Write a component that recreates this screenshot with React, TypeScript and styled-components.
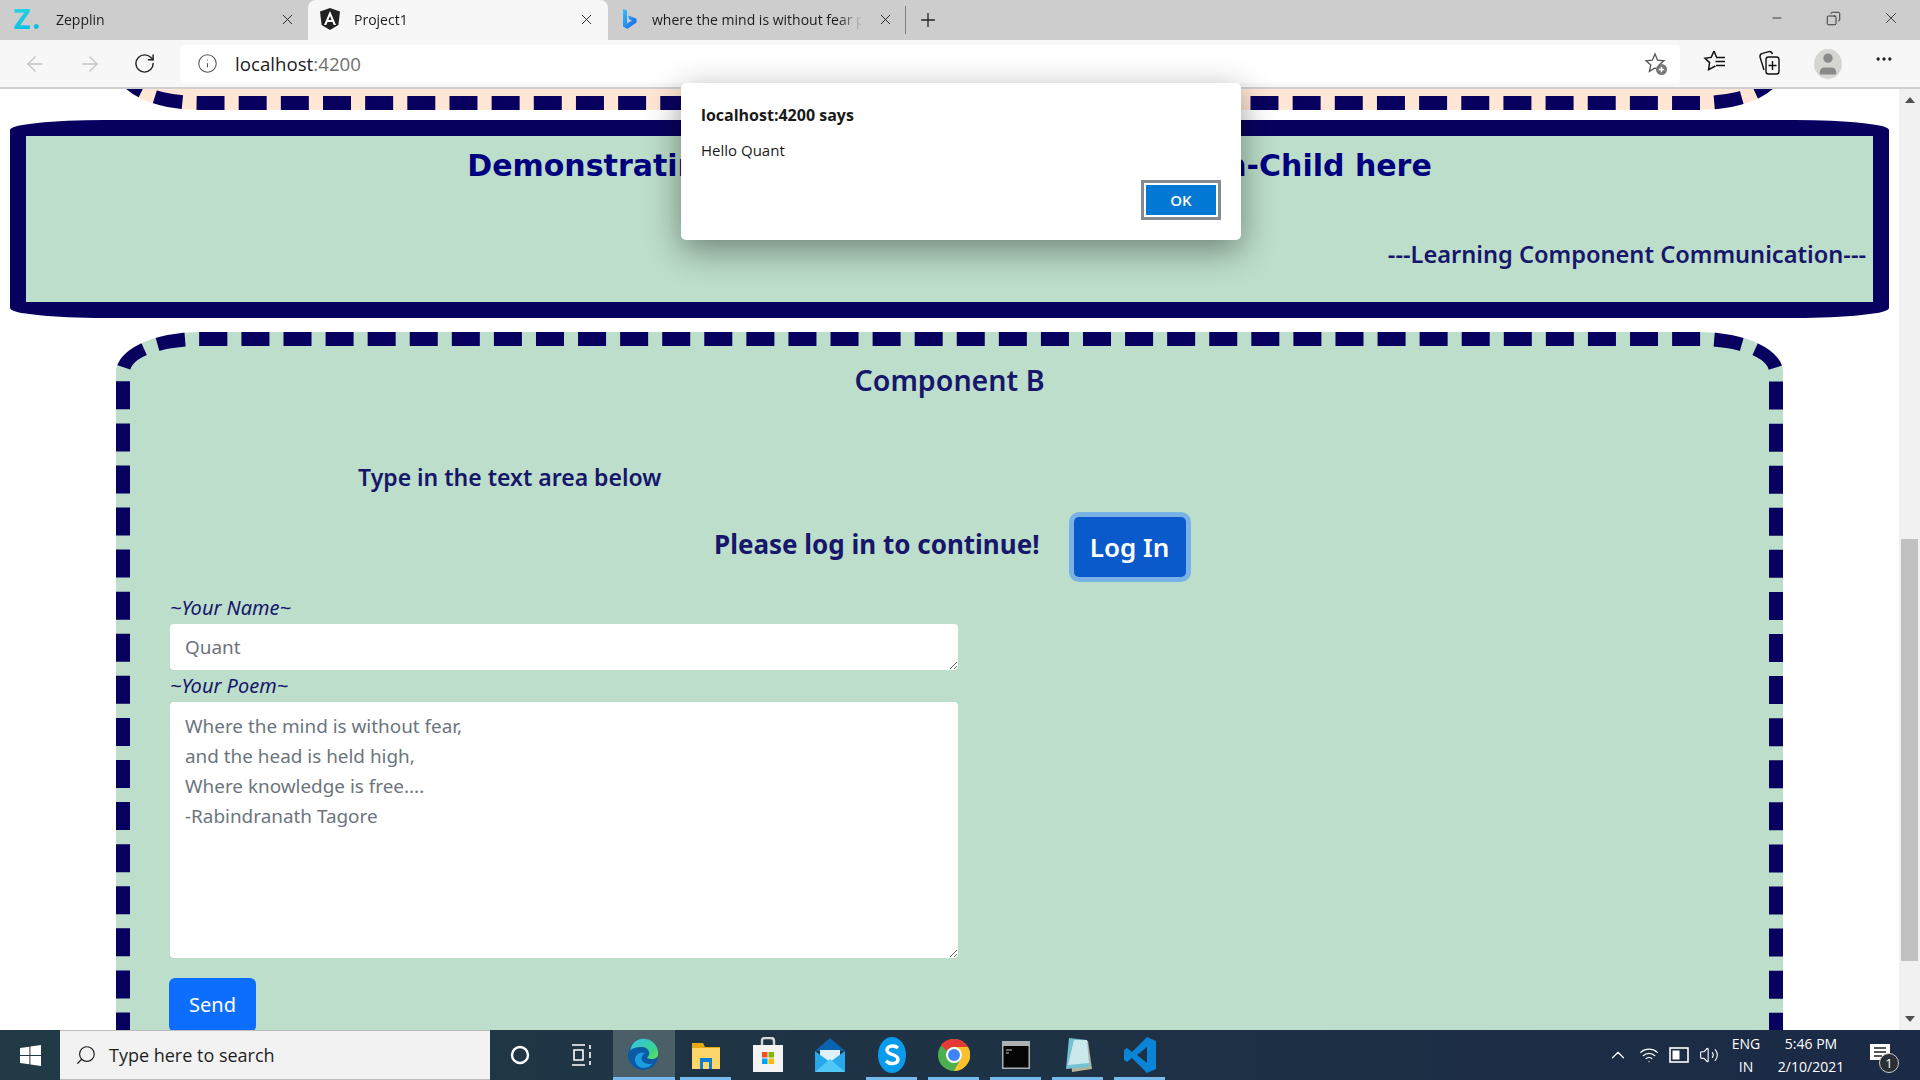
import React from 'react';
import styled, { createGlobalStyle } from 'styled-components';
import {
  ArrowLeft, ArrowRight, RotateCw, Info, Plus, X, Minus, Copy, Search, MoreHorizontal,
  ChevronUp, Wifi, Volume2, User,
} from 'lucide-react';

const navy = '#08005e';
const ink = '#16166b';
const uiFont = '"Open Sans", "Noto Sans", sans-serif';
const pageFont = '"Noto Sans", "Open Sans", sans-serif';

const GlobalStyle = createGlobalStyle`
  html, body { margin: 0; padding: 0; height: 100%; overflow: hidden; }
  #root { height: 100%; }
  * { box-sizing: border-box; }
`;

// browser chrome
const Screen = styled.div`
  position: relative;
  width: 1920px;
  height: 1080px;
  display: flex;
  flex-direction: column;
  overflow: hidden;
  font-family: ${uiFont};
  background: #fff;
`;
const TabStrip = styled.div`
  height: 40px;
  flex: none;
  display: flex;
  align-items: stretch;
  background: #cdcdcd;
  gap: 2px;
`;
const Tab = styled.div<{ $active?: boolean; $width: number; $endPad: number }>`
  width: ${(p) => p.$width}px;
  display: flex;
  align-items: center;
  padding: 0 ${(p) => p.$endPad}px 2px 12px;
  gap: 14px;
  border-radius: 8px 8px 0 0;
  background: ${(p) => (p.$active ? '#f7f7f7' : 'transparent')};
  font-size: 14px;
  color: #1c1c1c;
`;
const TabTitle = styled.span`
  flex: 1;
  overflow: hidden;
  white-space: nowrap;
  -webkit-mask-image: linear-gradient(to right, #000 88%, transparent);
  mask-image: linear-gradient(to right, #000 88%, transparent);
`;
const ZepplinMark = styled.span`
  width: 30px;
  font: 800 27px/1 "Inter", sans-serif;
  text-align: center;
  background: linear-gradient(160deg, #2fd6e0, #00b8e6);
  -webkit-background-clip: text;
  background-clip: text;
  color: transparent;
`;
const TabDivider = styled.div`
  width: 1px;
  height: 28px;
  margin: 6px 0 0 0;
  background: #7d7d7d;
`;
const NewTab = styled.div`
  width: 40px;
  display: flex;
  align-items: center;
  justify-content: center;
  color: #222;
`;
const WindowControls = styled.div`
  margin-left: auto;
  display: flex;
  align-items: center;
  height: 36px;
  padding-right: 1px;
`;
const WindowButton = styled.div`
  width: 57px;
  display: flex;
  justify-content: center;
  color: #111;
`;

const Toolbar = styled.div`
  height: 49px;
  flex: none;
  display: flex;
  align-items: center;
  padding: 0 0 0 7px;
  background: #f7f7f7;
  border-bottom: 2px solid #cfcfcf;
`;
const NavButton = styled.div<{ $muted?: boolean; $width?: number }>`
  width: ${(p) => p.$width ?? 55}px;
  display: flex;
  justify-content: center;
  color: ${(p) => (p.$muted ? '#c4c4c4' : '#222')};
`;
const AddressBar = styled.div`
  width: 1500px;
  height: 38px;
  margin: 0 0 0 9px;
  display: flex;
  align-items: center;
  padding: 0 10px 0 17px;
  background: #fff;
  border-radius: 4px;
  font-size: 18.7px;
  color: #1c1c1c;
`;
const Port = styled.span`
  color: #6f6f6f;
`;
const UrlText = styled.span`
  margin-left: 17px;
  flex: 1;
`;
const ToolIcons = styled.div`
  display: flex;
  margin-left: 7px;
`;
const Avatar = styled.div`
  width: 28px;
  height: 30px;
  margin-left: 2px;
  border-radius: 50%;
  background: #d5d5d2;
  color: #8a8a8a;
  display: flex;
  align-items: center;
  justify-content: center;
  overflow: hidden;
`;

// page content
const PageRow = styled.div`
  flex: 1;
  min-height: 0;
  display: flex;
`;
const Viewport = styled.div`
  flex: 1;
  min-width: 0;
  overflow: hidden;
  background: #fff;
`;
const ScrollBar = styled.div`
  width: 21px;
  flex: none;
  display: flex;
  flex-direction: column;
  align-items: center;
  background: #f1f1f1;
`;
const ScrollArrow = styled.div<{ $down?: boolean }>`
  height: 22px;
  flex: none;
  width: 0;
  margin-top: ${(p) => (p.$down ? 'auto' : '8px')};
  border-left: 5px solid transparent;
  border-right: 5px solid transparent;
  ${(p) => (p.$down ? 'border-top: 6px solid #505050; height: 6px; margin-bottom: 8px;' : 'border-bottom: 6px solid #505050; height: 6px;')}
`;
const ScrollThumb = styled.div`
  width: 17px;
  height: 422px;
  margin-top: 436px;
  background: #c1c1c1;
`;
const PrevCard = styled.div`
  height: 805px;
  margin: -784px 116px 0;
  border: 14px dashed ${navy};
  border-radius: 5%;
  background: #ffe6d5;
`;
const Banner = styled.section`
  height: 198px;
  margin: 10px 10px 0;
  border: 16px solid ${navy};
  border-radius: 5%;
  background: #bcdeca;
  padding: 9px 7px 0;
`;
const BannerTitle = styled.h1`
  margin: 0;
  text-align: center;
  font: 700 30px/42px "DejaVu Sans", sans-serif;
  color: #00007f;
`;
const BannerNote = styled.p`
  margin: 51px 0 0;
  text-align: right;
  font: 600 23.6px/32px ${pageFont};
  color: ${ink};
`;
const Card = styled.section`
  height: 800px;
  margin: 14px 116px 0;
  border: 14px dashed ${navy};
  border-radius: 5%;
  background: #bcdeca;
  padding: 14px 0 0 40px;
`;
const CardTitle = styled.h2`
  margin: 0 0 0 -40px;
  text-align: center;
  font: 600 28.6px/40px ${pageFont};
  color: ${ink};
`;
const Hint = styled.h3`
  margin: 61px 0 0 188px;
  font: 600 23px/32px ${pageFont};
  color: ${ink};
`;
const LoginRow = styled.div`
  display: flex;
  align-items: center;
  margin: 24px 0 0 544px;
  gap: 34px;
`;
const LoginText = styled.span`
  font: 700 26px/36px ${pageFont};
  color: ${ink};
  margin-top: -6px;
`;
const LoginButton = styled.button`
  width: 112px;
  height: 60px;
  border: 0;
  border-radius: 5px;
  background: #0b5acb;
  color: #fff;
  font: 600 26px/1 ${pageFont};
  box-shadow: 0 0 0 5px #7ab1e6;
`;
const Form = styled.form`
  width: 788px;
  margin-top: 15px;
  display: flex;
  flex-direction: column;
`;
const FieldLabel = styled.label`
  height: 32px;
  font: italic 400 20px/32px ${pageFont};
  color: ${ink};
`;
const Field = styled.textarea<{ $height: number; $padTop: number }>`
  height: ${(p) => p.$height}px;
  width: 100%;
  display: block;
  border: 0;
  border-radius: 4px;
  padding: ${(p) => p.$padTop}px 15px 0;
  background: #fff;
  resize: vertical;
  font: 400 18.9px/30px ${pageFont};
  &::placeholder {
    color: #6c757d;
    opacity: 1;
  }
`;
const SendButton = styled.button`
  width: 87px;
  height: 54px;
  margin: 20px 0 0 -1px;
  border: 0;
  border-radius: 6px;
  background: #0d6efd;
  color: #fff;
  font: 400 20px/1 ${pageFont};
`;

// alert dialog
const Dialog = styled.div`
  position: absolute;
  left: 681px;
  top: 83px;
  width: 560px;
  height: 157px;
  padding: 20px 20px 0;
  background: #fff;
  border-radius: 5px;
  box-shadow: 0 10px 34px rgba(0, 0, 0, 0.42);
  color: #1a1a1a;
`;
const DialogTitle = styled.div`
  font: 700 16px/24px ${uiFont};
`;
const DialogBody = styled.div`
  margin-top: 11px;
  font: 400 15px/24px ${uiFont};
`;
const DialogActions = styled.div`
  margin-top: 18px;
  display: flex;
  justify-content: flex-end;
`;
const OkButton = styled.button`
  width: 80px;
  height: 40px;
  border: 3px solid #858b91;
  outline: 2px solid #fff;
  outline-offset: -5px;
  background: #0078d4;
  color: #fff;
  font: 600 15px/1 ${uiFont};
`;

// taskbar
const Taskbar = styled.div`
  height: 50px;
  flex: none;
  display: flex;
  align-items: stretch;
  background: linear-gradient(90deg, #213a45, #1b2a45);
  color: #fff;
`;
const StartButton = styled.div`
  width: 60px;
  display: flex;
  align-items: center;
  justify-content: center;
`;
const SearchBox = styled.div`
  width: 430px;
  display: flex;
  align-items: center;
  gap: 12px;
  padding-left: 15px;
  background: #f2f2f2;
  border-top: 1px solid #bcbcbc;
  border-bottom: 1px solid #bcbcbc;
  color: #1e1e1e;
  font-size: 18px;
`;
const TaskSlot = styled.div<{ $width?: number; $running?: boolean; $active?: boolean }>`
  position: relative;
  width: ${(p) => p.$width ?? 62}px;
  display: flex;
  align-items: center;
  justify-content: center;
  background: ${(p) => (p.$active ? '#4b5f69' : 'transparent')};
  &::after {
    content: '';
    display: ${(p) => (p.$running ? 'block' : 'none')};
    position: absolute;
    bottom: 0;
    left: ${(p) => (p.$active ? 0 : 5)}px;
    right: ${(p) => (p.$active ? 0 : 6)}px;
    height: 3px;
    background: #76b9ed;
  }
`;
const Tray = styled.div`
  margin-left: auto;
  display: flex;
  align-items: center;
  gap: 10px;
  padding-right: 25px;
`;
const TrayText = styled.div<{ $width: number }>`
  width: ${(p) => p.$width}px;
  text-align: center;
  font-size: 14px;
  line-height: 23px;
`;
const Notify = styled.div`
  position: relative;
  width: 30px;
  margin-left: 6px;
  display: flex;
  justify-content: center;
`;
const NotifyBadge = styled.span`
  position: absolute;
  left: 14px;
  top: 9px;
  width: 20px;
  height: 20px;
  border-radius: 50%;
  border: 1px solid #ccc;
  background: #2a2f36;
  font-size: 13px;
  line-height: 18px;
  text-align: center;
`;

const AngularIcon = () => (
  <svg width="20" height="22" viewBox="0 0 20 22">
    <path d="M10 0 L20 3.6 L18.4 17 L10 22 L1.6 17 L0 3.6Z" fill="#222" />
    <path d="M10 3 L4 17 H6.3 L7.5 14 H12.5 L13.7 17 H16 Z M8.4 12 L10 8 L11.6 12Z" fill="#fff" fillRule="evenodd" />
  </svg>
);
const BingIcon = () => (
  <svg width="16" height="22" viewBox="0 0 16 22">
    <defs>
      <linearGradient id="bing" x1="0" y1="0" x2="1" y2="1">
        <stop offset="0" stopColor="#37bdff" />
        <stop offset="1" stopColor="#1763e0" />
      </linearGradient>
    </defs>
    <path d="M1 1 L5 2.5 V15.5 L10 12.6 L7.4 11.4 L6 7.6 L14.5 10.6 V14.6 L5.2 21 L1 18.6Z" fill="url(#bing)" />
  </svg>
);
const StarAdd = () => (
  <svg width="26" height="26" viewBox="0 0 26 26" fill="none">
    <path d="M11 3 L13.6 9.2 L20 9.8 L15.2 14 L16.6 20.4 L11 17 L5.4 20.4 L6.8 14 L2 9.8 L8.4 9.2Z" stroke="#555" strokeWidth="1.3" />
    <circle cx="17.5" cy="18.5" r="5.5" fill="#777" />
    <path d="M17.5 15.8v5.4M14.8 18.5h5.4" stroke="#fff" strokeWidth="1.4" />
  </svg>
);
const FavList = () => (
  <svg width="24" height="26" viewBox="0 0 24 26" fill="none" stroke="#111" strokeWidth="1.5">
    <path d="M11 2 L13.4 8 M11 2 L8.2 8.4 L2 9.2 L6.6 13.6 L5.6 20.6 L12.4 17" />
    <path d="M13 8.5h9M12.5 12.5h9.5M13 16.5h9" />
  </svg>
);
const Collections = () => (
  <svg width="26" height="28" viewBox="0 0 26 28" fill="none" stroke="#111" strokeWidth="1.4">
    <path d="M7 21 L3 8 Q2.6 5 5.5 4.4 L12 2.6 Q14.6 2.2 15.4 5" />
    <rect x="9" y="8" width="13" height="17" rx="2.5" />
    <path d="M15.5 12v9M11.5 16.5h8" />
  </svg>
);
const WindowsLogo = () => (
  <svg width="21" height="21" viewBox="0 0 21 21" fill="#fff">
    <path d="M0 3 L9.4 1.7 V10 H0Z M10.4 1.5 L21 0 V10 H10.4Z M0 11 H9.4 V19.3 L0 18Z M10.4 11 H21 V21 L10.4 19.5Z" />
  </svg>
);
const SearchGlyph = styled(Search)`
  transform: scaleX(-1);
`;
const RestoreGlyph = styled(Copy)`
  transform: scaleX(-1);
`;
const TaskView = () => (
  <svg width="22" height="24" viewBox="0 0 22 24" fill="none" stroke="#fff" strokeWidth="1.6">
    <path d="M1 2h13M1 22h13M3 7h9v10H3z" />
    <path d="M19 2v4M19 9v6M19 18v4" />
  </svg>
);
const EdgeIcon = () => (
  <svg width="32" height="36" viewBox="0 0 32 36">
    <defs>
      <linearGradient id="edgeA" x1="0" y1="0" x2="1" y2="1">
        <stop offset="0" stopColor="#35c1f1" />
        <stop offset="0.7" stopColor="#3bd48a" />
        <stop offset="1" stopColor="#6be35a" />
      </linearGradient>
    </defs>
    <circle cx="15" cy="18" r="15" fill="#0c59a4" />
    <path d="M2 14 C4 3 13 1 18 2 C27 3.5 31 12 30 18 C29.5 22 23 23 19 21 C24 16 20 10 14 10 C8 10 4 11 2 14Z" fill="url(#edgeA)" />
    <path d="M24 27 C19 33 9 32 7 24 C6 18 12 14 17 16 C13 18 12 24 17 26 C19 27 22 27 24 27Z" fill="#1b9de2" />
  </svg>
);
const ExplorerIcon = () => (
  <svg width="30" height="30" viewBox="0 0 30 30">
    <path d="M1 3 H12 L14 7 H29 V12 H1Z" fill="#e8a912" />
    <path d="M1 8 H29 V29 H1Z" fill="#fcd669" />
    <path d="M9 29 V18 H21 V29 H18 V22 H12 V29Z" fill="#0f7cd4" />
  </svg>
);
const StoreIcon = () => (
  <svg width="30" height="36" viewBox="0 0 30 36">
    <path d="M9 8 V4 Q9 1 12 1 H18 Q21 1 21 4 V8" fill="none" stroke="#d8d8d8" strokeWidth="2.4" />
    <path d="M0 8 H30 V35 H0Z" fill="#f3f3f3" />
    <path d="M9 15h5.5v5.5H9z" fill="#f25022" />
    <path d="M15.5 15H21v5.5h-5.5z" fill="#7fba00" />
    <path d="M9 21.5h5.5V27H9z" fill="#00a4ef" />
    <path d="M15.5 21.5H21V27h-5.5z" fill="#ffb900" />
  </svg>
);
const MailIcon = () => (
  <svg width="32" height="36" viewBox="0 0 32 36">
    <path d="M1 14 L16 1 L31 14Z" fill="#0a62b0" />
    <path d="M6 13h20v12H6z" fill="#dff2fb" />
    <path d="M1 14 L16 25 L31 14 V35 H1Z" fill="#28a8ea" />
    <path d="M1 35 L16 22 L31 35Z" fill="#50c8f5" />
  </svg>
);
const SkypeIcon = () => (
  <svg width="28" height="36" viewBox="0 0 28 36">
    <ellipse cx="14" cy="18" rx="14" ry="18" fill="#0a9bea" />
    <path d="M20 11 C16 7.5 9 9 9 13 C9 18.5 20 16.5 20 22.5 C20 27 12 28 8 24" fill="none" stroke="#fff" strokeWidth="3.4" />
  </svg>
);
const ChromeIcon = () => (
  <svg width="32" height="32" viewBox="0 0 32 32">
    <circle cx="16" cy="16" r="16" fill="#4caf50" />
    <path d="M16 0 A16 16 0 0 1 30 8 H16 A8 8 0 0 0 9 12 L3 6 A16 16 0 0 1 16 0Z" fill="#e53935" />
    <path d="M30 8 A16 16 0 0 1 16 32 L22 21 A8 8 0 0 0 24 16 Q23 11 16 8Z" fill="#fbc02d" />
    <circle cx="16" cy="16" r="8" fill="#fff" />
    <circle cx="16" cy="16" r="6" fill="#3f84f3" />
  </svg>
);
const TerminalIcon = () => (
  <svg width="28" height="28" viewBox="0 0 28 28">
    <rect width="28" height="28" fill="#aeb1b3" />
    <rect x="1.5" y="5" width="25" height="21.5" fill="#050505" />
    <path d="M4 9h6M4 12h3" stroke="#ccc" strokeWidth="1.2" />
  </svg>
);
const NotepadIcon = () => (
  <svg width="28" height="36" viewBox="0 0 28 36">
    <path d="M6 2 L24 4 L28 32 L8 35Z" fill="#b7b196" />
    <path d="M5 1 L23 3 L26 30 L2 32Z" fill="#72c2d0" />
    <path d="M10 3 L23 3 L25 26 L4 28Z" fill="#e9f4f6" opacity="0.75" />
  </svg>
);
const VsCodeIcon = () => (
  <svg width="32" height="36" viewBox="0 0 32 36">
    <path d="M23 0 L32 4 V32 L23 36 L8 21 L3 25 L0 23 V13 L3 11 L8 15Z M23 10 L13 18 L23 26Z" fill="#0a84d6" fillRule="evenodd" />
  </svg>
);
const BatteryIcon = () => (
  <svg width="20" height="16" viewBox="0 0 20 16">
    <rect x="1" y="1" width="18" height="14" fill="none" stroke="#fff" strokeWidth="1.6" />
    <rect x="3.5" y="3.5" width="7" height="9" fill="#fff" />
  </svg>
);

const App: React.FC = () => (
  <Screen>
    <GlobalStyle />
    <TabStrip>
      <Tab $width={306} $endPad={10}>
        <ZepplinMark>Z.</ZepplinMark>
        <TabTitle>Zepplin</TabTitle>
        <X size={17} strokeWidth={1.3} />
      </Tab>
      <Tab $active $width={300} $endPad={13}>
        <AngularIcon />
        <TabTitle>Project1</TabTitle>
        <X size={17} strokeWidth={1.3} />
      </Tab>
      <Tab $width={293} $endPad={9}>
        <BingIcon />
        <TabTitle>where the mind is without fear poem</TabTitle>
        <X size={17} strokeWidth={1.3} />
      </Tab>
      <TabDivider />
      <NewTab>
        <Plus size={22} strokeWidth={1.4} />
      </NewTab>
      <WindowControls>
        <WindowButton><Minus size={14} strokeWidth={1.3} /></WindowButton>
        <WindowButton><RestoreGlyph size={15} strokeWidth={1.3} /></WindowButton>
        <WindowButton><X size={18} strokeWidth={1} /></WindowButton>
      </WindowControls>
    </TabStrip>
    <Toolbar>
      <NavButton $muted><ArrowLeft size={24} strokeWidth={1.4} /></NavButton>
      <NavButton $muted><ArrowRight size={24} strokeWidth={1.4} /></NavButton>
      <NavButton $width={54}><RotateCw size={23} strokeWidth={1.5} /></NavButton>
      <AddressBar>
        <Info size={21} strokeWidth={1.2} color="#555" />
        <UrlText>localhost<Port>:4200</Port></UrlText>
        <StarAdd />
      </AddressBar>
      <ToolIcons>
        <NavButton><FavList /></NavButton>
        <NavButton><Collections /></NavButton>
        <NavButton $width={60}>
          <Avatar><User size={28} fill="#8a8a8a" strokeWidth={0} /></Avatar>
        </NavButton>
        <NavButton $width={54}><MoreHorizontal size={20} strokeWidth={2} /></NavButton>
      </ToolIcons>
    </Toolbar>
    <PageRow>
      <Viewport>
        <PrevCard />
        <Banner>
          <BannerTitle>Demonstrating Parents-to-Child and Parent-in-Child here</BannerTitle>
          <BannerNote>---Learning Component Communication---</BannerNote>
        </Banner>
        <Card>
          <CardTitle>Component B</CardTitle>
          <Hint>Type in the text area below</Hint>
          <LoginRow>
            <LoginText>Please log in to continue!</LoginText>
            <LoginButton type="button">Log In</LoginButton>
          </LoginRow>
          <Form>
            <FieldLabel>~Your Name~</FieldLabel>
            <Field $height={46} $padTop={8} placeholder="Quant" />
            <FieldLabel>~Your Poem~</FieldLabel>
            <Field
              $height={256}
              $padTop={9}
              placeholder={'Where the mind is without fear,\nand the head is held high,\nWhere knowledge is free....\n-Rabindranath Tagore'}
            />
            <SendButton type="button">Send</SendButton>
          </Form>
        </Card>
      </Viewport>
      <ScrollBar>
        <ScrollArrow />
        <ScrollThumb />
        <ScrollArrow $down />
      </ScrollBar>
    </PageRow>
    <Dialog>
      <DialogTitle>localhost:4200 says</DialogTitle>
      <DialogBody>Hello Quant</DialogBody>
      <DialogActions>
        <OkButton type="button">OK</OkButton>
      </DialogActions>
    </Dialog>
    <Taskbar>
      <StartButton><WindowsLogo /></StartButton>
      <SearchBox>
        <SearchGlyph size={22} strokeWidth={1.3} />
        Type here to search
      </SearchBox>
      <TaskSlot $width={60}>
        <svg width="20" height="20" viewBox="0 0 20 20" fill="none" stroke="#fff" strokeWidth="2.4"><circle cx="10" cy="10" r="8" /></svg>
      </TaskSlot>
      <TaskSlot $width={63}><TaskView /></TaskSlot>
      <TaskSlot $running $active><EdgeIcon /></TaskSlot>
      <TaskSlot $running><ExplorerIcon /></TaskSlot>
      <TaskSlot><StoreIcon /></TaskSlot>
      <TaskSlot><MailIcon /></TaskSlot>
      <TaskSlot $running><SkypeIcon /></TaskSlot>
      <TaskSlot $running><ChromeIcon /></TaskSlot>
      <TaskSlot $running><TerminalIcon /></TaskSlot>
      <TaskSlot $running><NotepadIcon /></TaskSlot>
      <TaskSlot $running><VsCodeIcon /></TaskSlot>
      <Tray>
        <ChevronUp size={22} strokeWidth={1.3} />
        <Wifi size={20} strokeWidth={1.4} />
        <BatteryIcon />
        <Volume2 size={20} strokeWidth={1.3} />
        <TrayText $width={34}>ENG<br />IN</TrayText>
        <TrayText $width={76}>5:46 PM<br />2/10/2021</TrayText>
        <Notify>
          <svg width="20" height="22" viewBox="0 0 20 22"><path d="M0 0h20v16H0z" fill="#fff" /><path d="M4 4h12M4 8h12M4 12h8" stroke="#222" strokeWidth="1.4" /></svg>
          <NotifyBadge>1</NotifyBadge>
        </Notify>
      </Tray>
    </Taskbar>
  </Screen>
);

export default App;
